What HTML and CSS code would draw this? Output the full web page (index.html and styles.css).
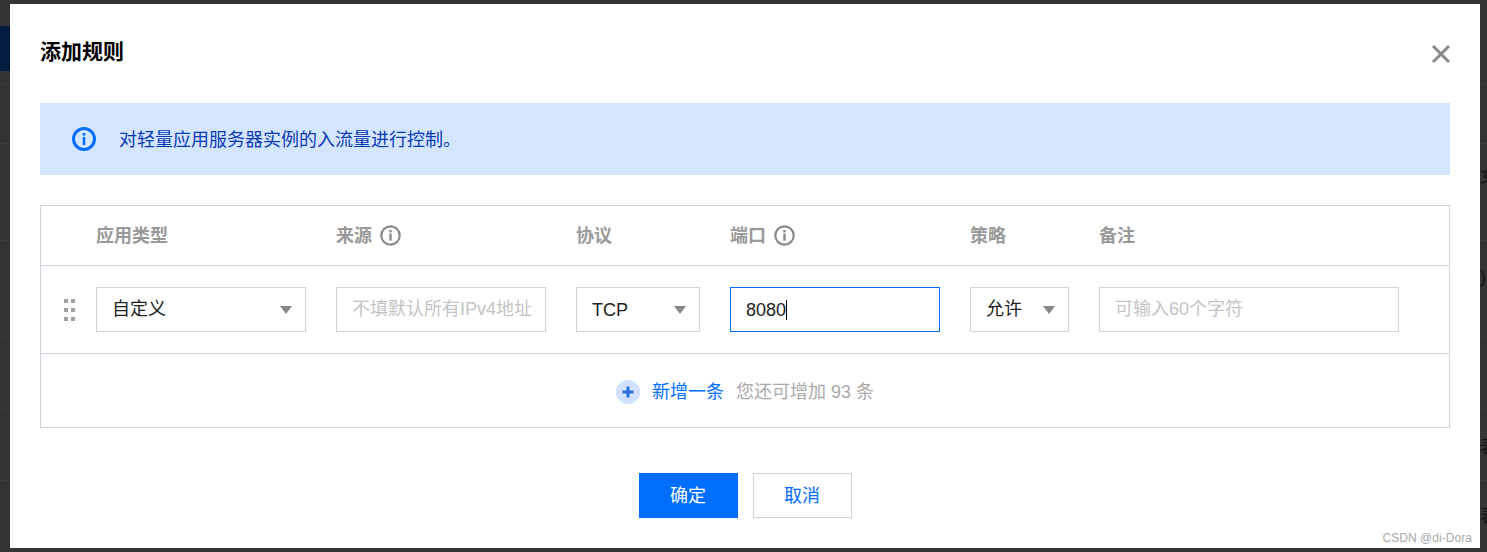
FILE: index.html
```html
<!DOCTYPE html>
<html lang="zh-CN">
<head>
  <meta charset="UTF-8">
  <title>添加规则</title>
  <link rel="stylesheet" href="styles.css">
</head>
<body>
  <!-- page behind the mask, only the edges show -->
  <div class="bg-nav"></div>
  <div class="bg-line l1"></div>
  <div class="bg-line l2"></div>
  <div class="bg-line l3"></div>
  <div class="bg-line l4"></div>
  <div class="bg-line l5"></div>
  <div class="bg-line l6"></div>
  <span class="bg-text t1">女</span>
  <span class="bg-text t2">)</span>
  <span class="bg-text t3">表</span>
  <span class="bg-text t4">表</span>

  <div class="dialog">
    <div class="dialog-head">
      <h2>添加规则</h2>
      <svg class="close" width="20" height="20" viewBox="0 0 20 20">
        <path d="M2 2L18 18M18 2L2 18" stroke="#888" stroke-width="3" fill="none"/>
      </svg>
    </div>

    <div class="alert">
      <svg width="24" height="24" viewBox="0 0 24 24">
        <circle cx="12" cy="12" r="10.5" fill="none" stroke="#006eff" stroke-width="3"/>
        <rect x="10.7" y="6" width="2.6" height="2.6" fill="#006eff"/>
        <rect x="10.7" y="10" width="2.6" height="8" fill="#006eff"/>
      </svg>
      <span class="alert-text">对轻量应用服务器实例的入流量进行控制。</span>
    </div>

    <div class="rule-table">
      <div class="row head-row">
        <div class="col col-type">应用类型</div>
        <div class="col col-source">来源
          <svg width="21" height="21" viewBox="0 0 21 21">
            <circle cx="10.5" cy="10.5" r="9.2" fill="none" stroke="#888" stroke-width="2.2"/>
            <rect x="9.3" y="5" width="2.4" height="2.4" fill="#888"/>
            <rect x="9.3" y="8.6" width="2.4" height="7" fill="#888"/>
          </svg>
        </div>
        <div class="col col-proto">协议</div>
        <div class="col col-port">端口
          <svg width="21" height="21" viewBox="0 0 21 21">
            <circle cx="10.5" cy="10.5" r="9.2" fill="none" stroke="#888" stroke-width="2.2"/>
            <rect x="9.3" y="5" width="2.4" height="2.4" fill="#888"/>
            <rect x="9.3" y="8.6" width="2.4" height="7" fill="#888"/>
          </svg>
        </div>
        <div class="col col-action">策略</div>
        <div class="col col-note">备注</div>
      </div>

      <div class="row body-row">
        <div class="grip">
          <i></i><i></i><i></i><i></i><i></i><i></i>
        </div>
        <div class="col col-type field select">自定义<b class="arrow"></b></div>
        <div class="col col-source field placeholder">不填默认所有IPv4地址</div>
        <div class="col col-proto field select latin">TCP<b class="arrow"></b></div>
        <div class="col col-port field focused latin">8080<span class="caret"></span></div>
        <div class="col col-action field select">允许<b class="arrow"></b></div>
        <div class="col col-note field placeholder">可输入60个字符</div>
      </div>

      <div class="add-row">
        <svg width="24" height="24" viewBox="0 0 24 24">
          <circle cx="12" cy="12" r="12" fill="#d0e2fd"/>
          <path d="M12 6.5V17.5M6.5 12H17.5" stroke="#2b6fdc" stroke-width="3" fill="none"/>
        </svg>
        <a class="add-link">新增一条</a>
        <span class="add-hint">您还可增加 93 条</span>
      </div>
    </div>

    <div class="dialog-foot">
      <button class="btn btn-primary">确定</button>
      <button class="btn">取消</button>
    </div>

    <span class="watermark">CSDN @di-Dora</span>
  </div>
</body>
</html>
```

FILE: styles.css
```css
* {
  box-sizing: border-box;
}

html, body {
  height: 100%;
}

body {
  margin: 0;
  padding: 4px 7px 4px 10px;
  background-color: #343434;
  font-family: "Liberation Sans", "Noto Sans CJK SC", sans-serif;
  font-size: 18px;
  color: #222;
  overflow: hidden;
}

/* page behind the mask */
.bg-nav {
  position: absolute;
  left: 0;
  top: 26px;
  width: 10px;
  height: 45px;
  background-color: #021d3f;
}

.bg-line {
  position: absolute;
  left: 0;
  width: 100%;
  height: 1px;
  background-color: #3c3c3c;
}

.l1 { top: 83px; }
.l2 { top: 143px; }
.l3 { top: 240px; }
.l4 { top: 337px; }
.l5 { top: 409px; }
.l6 { top: 480px; }

.bg-text {
  position: absolute;
  left: 1480px;
  font-size: 18px;
  line-height: 20px;
  color: #111;
}

.t1 { top: 166px; }
.t2 { top: 267px; }
.t3 { top: 437px; }
.t4 { top: 506px; }

/* dialog */
.dialog {
  position: relative;
  width: 1470px;
  height: 544px;
  padding: 0 30px;
  background-color: #fff;
}

.dialog-head {
  display: flex;
  justify-content: space-between;
  align-items: center;
  height: 99px;
}

.dialog-head h2 {
  margin: 0 0 4px;
  font-size: 21px;
  line-height: 30px;
  font-weight: bold;
  color: #000;
}

.close {
  margin-right: -1px;
}

.alert {
  display: flex;
  align-items: center;
  gap: 23px;
  height: 72px;
  padding-left: 32px;
  background-color: #d4e5fe;
  color: #0a3bb5;
}

.alert-text {
  padding-bottom: 2px;
}

.rule-table {
  margin-top: 30px;
  height: 223px;
  border: 1px solid #cfd5de;
}

.row {
  display: flex;
  gap: 30px;
  padding-left: 55px;
  border-bottom: 1px solid #cfd5de;
}

.head-row {
  height: 60px;
  align-items: center;
  padding-bottom: 4px;
  font-weight: bold;
  color: #999;
}

.head-row svg {
  margin-left: 3px;
  vertical-align: -4px;
}

.body-row {
  position: relative;
  height: 88px;
  align-items: center;
}

.col-type, .col-source, .col-port { width: 210px; }
.col-proto { width: 124px; }
.col-action { width: 99px; }
.col-note { width: 300px; }

.col {
  flex-shrink: 0;
  white-space: nowrap;
}

.field {
  position: relative;
  height: 45px;
  margin-top: -1px;
  padding: 0 15px;
  line-height: 43px;
  border: 1px solid #cfd5de;
  overflow: hidden;
}

.latin {
  line-height: 45px;
}

.placeholder {
  color: #c4c4c4;
}

.focused {
  border-color: #006eff;
}

.caret {
  display: inline-block;
  width: 1px;
  height: 20px;
  vertical-align: -4px;
  background-color: #000;
}

.arrow {
  position: absolute;
  right: 13px;
  top: 18px;
  width: 0;
  height: 0;
  border-left: 6.5px solid transparent;
  border-right: 6.5px solid transparent;
  border-top: 8px solid #888;
}

.grip {
  position: absolute;
  left: 23px;
  top: 33px;
  display: grid;
  grid-template-columns: 4px 4px;
  grid-auto-rows: 4px;
  gap: 5px 3px;
}

.grip i {
  background-color: #a0a0a0;
}

.add-row {
  display: flex;
  align-items: center;
  justify-content: center;
  height: 74px;
  padding-top: 1px;
}

.add-link {
  margin-left: 12px;
  padding-bottom: 3px;
  color: #006eff;
}

.add-hint {
  margin-left: 12px;
  padding-bottom: 3px;
  color: #aaa;
}

.dialog-foot {
  display: flex;
  justify-content: center;
  gap: 15px;
  margin-top: 45px;
}

.btn {
  width: 99px;
  height: 45px;
  padding: 0 0 3px;
  border: 1px solid #cfd5de;
  background-color: #fff;
  color: #006eff;
  font-family: inherit;
  font-size: 18px;
  cursor: pointer;
}

.btn-primary {
  border-color: #006eff;
  background-color: #006eff;
  color: #fff;
}

.watermark {
  position: absolute;
  right: 8px;
  top: 527px;
  font-size: 12px;
  line-height: 14px;
  color: #aaa;
  letter-spacing: 0.05px;
}
```
